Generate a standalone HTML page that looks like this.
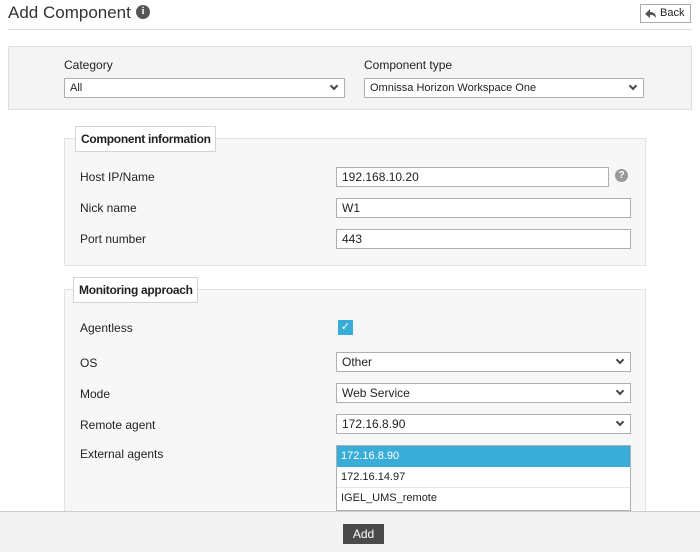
<!DOCTYPE html><html><head><style>
*{box-sizing:border-box;margin:0;padding:0}
body{width:700px;height:552px;overflow:hidden;background:#fff;font-family:"Liberation Sans",Arial,sans-serif;color:#222;font-size:12px;position:relative}
.a{position:absolute;white-space:nowrap}
.inp{position:absolute;background:#fff;border:1px solid #aab0b8;height:20px;padding:3px 5px;font-size:11px;line-height:13px;white-space:nowrap}
.sel:after{content:"";position:absolute;right:7px;top:4px;width:4px;height:4px;border-right:2px solid #444;border-bottom:2px solid #444;transform:rotate(45deg)}
.lbl{position:absolute;font-size:12px;white-space:nowrap}
.fs{position:absolute;background:#f7f7f7;border:1px solid #e3e3e3}
.lg{position:absolute;background:#fff;border:1px solid #d4d4d4;font-weight:bold;font-size:12px;padding:5px 5px;white-space:nowrap;letter-spacing:-0.3px;line-height:14px}
</style></head><body>
<div class="a" style="left:8px;top:3px;font-size:17px;color:#333">Add Component</div>
<div class="a" style="left:136px;top:5px;width:14px;height:14px;border-radius:50%;background:#555;color:#fff;font-size:10px;font-weight:bold;text-align:center;line-height:14px;font-family:'Liberation Serif',serif">i</div>
<div class="a" style="left:640px;top:4px;width:51px;height:19px;border:1px solid #aaa;font-size:11px;line-height:17px;padding-left:19px">Back</div>
<svg class="a" style="left:645px;top:9px" width="12" height="10" viewBox="0 0 12 10"><path d="M0 5 L5 0 V3 C9 3 11 5 11 9 C9 6 7 6 5 6 V9 Z" fill="#555"/></svg>
<div class="a" style="left:8px;top:29px;width:684px;height:1px;background:#ddd"></div>
<div class="a" style="left:8px;top:46px;width:684px;height:64px;background:#f4f4f4;border:1px solid #ddd"></div>
<div class="lbl" style="left:64px;top:58px">Category</div>
<div class="inp sel" style="left:64px;top:78px;width:281px">All</div>
<div class="lbl" style="left:364px;top:58px">Component type</div>
<div class="inp sel" style="left:364px;top:78px;width:280px">Omnissa Horizon Workspace One</div>

<div class="fs" style="left:64px;top:138px;width:582px;height:128px"></div>
<div class="lg" style="left:75px;top:126px;width:141px;height:26px">Component information</div>
<div class="lbl" style="left:80px;top:170px">Host IP/Name</div>
<div class="inp" style="left:336px;top:167px;width:273px;font-size:12px">192.168.10.20</div>
<div class="a" style="left:615px;top:169px;width:13px;height:13px;border-radius:50%;background:#999;color:#fff;font-size:10px;font-weight:bold;text-align:center;line-height:13px">?</div>
<div class="lbl" style="left:80px;top:201px">Nick name</div>
<div class="inp" style="left:336px;top:198px;width:295px;font-size:12px">W1</div>
<div class="lbl" style="left:80px;top:232px">Port number</div>
<div class="inp" style="left:336px;top:229px;width:295px;font-size:12px">443</div>

<div class="fs" style="left:64px;top:289px;width:582px;height:240px"></div>
<div class="lg" style="left:73px;top:277px;width:125px;height:26px">Monitoring approach</div>
<div class="lbl" style="left:80px;top:321px">Agentless</div>
<div class="a" style="left:338px;top:320px;width:15px;height:15px;background:#3aacd8;color:#fff;font-size:11px;text-align:center;line-height:15px">✓</div>
<div class="lbl" style="left:80px;top:356px">OS</div>
<div class="inp sel" style="left:336px;top:352px;width:295px;font-size:12px">Other</div>
<div class="lbl" style="left:80px;top:387px">Mode</div>
<div class="inp sel" style="left:336px;top:383px;width:295px;font-size:12px">Web Service</div>
<div class="lbl" style="left:80px;top:418px">Remote agent</div>
<div class="inp sel" style="left:336px;top:414px;width:295px;font-size:12px">172.16.8.90</div>
<div class="lbl" style="left:80px;top:447px">External agents</div>
<div class="a" style="left:336px;top:445px;width:295px;height:66px;background:#fff;border:1px solid #aab0b8;font-size:11px">
<div style="height:21px;background:#3aacd8;color:#fff;padding:4px 4px">172.16.8.90</div>
<div style="height:21px;padding:4px 4px;border-bottom:1px solid #e5e5e5">172.16.14.97</div>
<div style="height:21px;padding:4px 4px">IGEL_UMS_remote</div>
</div>
<div class="a" style="left:0;top:511px;width:700px;height:41px;background:#f3f3f3;border-top:1px solid #ccc"></div>
<div class="a" style="left:343px;top:524px;width:41px;height:20px;background:#4a4a4a;color:#fff;text-align:center;line-height:20px;font-size:12px">Add</div>
</body></html>
